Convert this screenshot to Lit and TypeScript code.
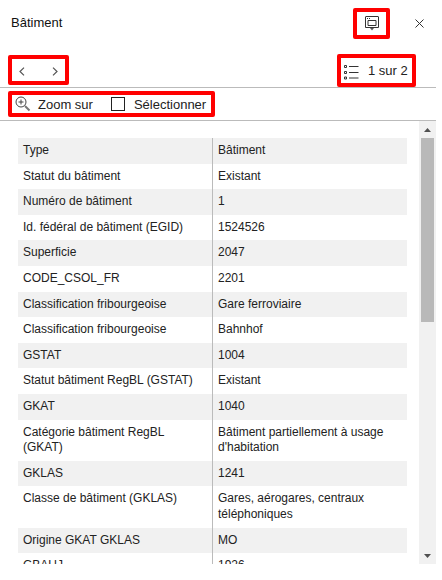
import {LitElement, css, html} from "lit";
import {customElement} from "lit/decorators.js";

const rows: [string, string][] = [
  ["Type", "Bâtiment"],
  ["Statut du bâtiment", "Existant"],
  ["Numéro de bâtiment", "1"],
  ["Id. fédéral de bâtiment (EGID)", "1524526"],
  ["Superficie", "2047"],
  ["CODE_CSOL_FR", "2201"],
  ["Classification fribourgeoise", "Gare ferroviaire"],
  ["Classification fribourgeoise", "Bahnhof"],
  ["GSTAT", "1004"],
  ["Statut bâtiment RegBL (GSTAT)", "Existant"],
  ["GKAT", "1040"],
  ["Catégorie bâtiment RegBL (GKAT)", "Bâtiment partiellement à usage d'habitation"],
  ["GKLAS", "1241"],
  ["Classe de bâtiment (GKLAS)", "Gares, aérogares, centraux téléphoniques"],
  ["Origine GKAT GKLAS", "MO"],
  ["GBAUJ", "1926"],
];

@customElement("app-root")
export class AppRoot extends LitElement {
  static override styles = css`
    :host {
      display: block;
      width: 436px;
      height: 580px;
      background: #fff;
      color: #222;
      font-family: "Liberation Sans", Arial, sans-serif;
      font-size: 12px;
      overflow: hidden;
    }

    svg {
      display: block;
      flex: none;
    }

    .marked {
      border: 4px solid #f00;
      border-radius: 2px;
      box-sizing: border-box;
      display: flex;
      align-items: center;
    }

    .header {
      height: 47px;
      display: flex;
      align-items: flex-start;
      padding-left: 11px;
    }

    .title {
      margin-top: 15px;
      line-height: 15px;
      font-size: 13px;
      color: #111;
    }

    .comment {
      margin: 8px 0 0 auto;
      width: 37px;
      height: 31px;
      justify-content: center;
    }

    .close {
      margin: 19px 12px 0 25px;
    }

    .nav {
      height: 41px;
      display: flex;
      align-items: flex-start;
      padding: 8px 20px 0 8px;
      box-sizing: border-box;
      border-bottom: 1px solid #bbb;
    }

    .arrows {
      width: 61px;
      height: 30px;
      gap: 27px;
      padding: 2px 0 0 7px;
    }

    .count {
      margin-left: auto;
      width: 79px;
      height: 33px;
      margin-top: -1px;
      gap: 9px;
      padding-left: 3px;
      font-size: 13px;
      white-space: nowrap;
    }

    .list-icon {
      margin-top: 2px;
    }

    .tools {
      height: 33px;
      padding: 3px 0 0 8px;
      box-sizing: border-box;
      border-bottom: 1px solid #bbb;
    }

    .toolbox {
      width: 207px;
      height: 26px;
      padding-left: 3px;
      font-size: 13px;
      white-space: nowrap;
    }

    .zoom-label {
      margin-left: 7px;
    }

    .check {
      width: 12px;
      height: 12px;
      border: 1px solid #222;
      margin: 0 9px 0 18px;
    }

    .body {
      display: flex;
      height: 443px;
    }

    .content {
      flex: 1;
      overflow: hidden;
      padding: 17px 12px 0 18px;
    }

    table {
      width: 389px;
      border-collapse: collapse;
      table-layout: fixed;
    }

    td {
      padding: 5px;
      line-height: 15.6px;
      vertical-align: top;
    }

    td:first-child {
      border-right: 1px solid #bbb;
    }

    tr:nth-child(odd) td {
      background: #f1f1f1;
    }

    .scrollbar {
      width: 17px;
      background: #f1f1f1;
      display: flex;
      flex-direction: column;
      align-items: center;
    }

    .step {
      height: 17px;
      display: flex;
      align-items: center;
      justify-content: center;
      flex: none;
    }

    .thumb {
      width: 13px;
      height: 184px;
      background: #b9b9b9;
    }

    .gap {
      flex: 1;
    }
  `;

  override render() {
    return html`
      <div class="header">
        <div class="title">Bâtiment</div>
        <div class="marked comment">
          <svg width="14" height="15" viewBox="0 0 14 15" fill="none" stroke="#333">
            <path d="M1 .5h12a.5.5 0 0 1 .5.5v10.5h-13V1a.5.5 0 0 1 .5-.5z" />
            <path d="M3 4.500h8v5H3z" />
            <path d="M2 2.500h1M4 2.500h1" />
            <path d="M5 12h4l-2 2.500z" fill="#555" stroke="none" />
          </svg>
        </div>
        <svg class="close" width="9" height="9" viewBox="0 0 9 9" stroke="#333">
          <path d="M.5.5l8 8M8.500.5l-8 8" />
        </svg>
      </div>
      <div class="nav">
        <div class="marked arrows">
          <svg width="6" height="9" viewBox="0 0 6 9" fill="none" stroke="#555" stroke-width="1.2">
            <path d="M5 .6L1 4.500 5 8.400" />
          </svg>
          <svg width="6" height="9" viewBox="0 0 6 9" fill="none" stroke="#555" stroke-width="1.2">
            <path d="M1 .6L5 4.500 1 8.400" />
          </svg>
        </div>
        <div class="marked count">
          <svg class="list-icon" width="15" height="16" viewBox="0 0 15 16" fill="none" stroke="#333">
            <path d="M.5 1.500h2v2h-2zM.5 7.500h2v2h-2zM.5 13h2v2h-2zM5 2.500h9.500M5 8.500h9.500M5 14h9.500" />
          </svg>
          <span>1 sur 2</span>
        </div>
      </div>
      <div class="tools">
        <div class="marked toolbox">
          <svg width="16" height="16" viewBox="0 0 16 16" fill="none" stroke="#444">
            <circle cx="6" cy="6" r="5" />
            <path d="M3.500 6h5M6 3.500v5" />
            <path d="M10 10l4.500 4.500" stroke-width="2" stroke="#777" />
          </svg>
          <span class="zoom-label">Zoom sur</span>
          <span class="check"></span>
          <span>Sélectionner</span>
        </div>
      </div>
      <div class="body">
        <div class="content">
          <table>
            ${rows.map(
              ([name, value]) => html`<tr><td>${name}</td><td>${value}</td></tr>`,
            )}
          </table>
        </div>
        <div class="scrollbar">
          <div class="step">
            <svg width="7" height="4" viewBox="0 0 7 4"><path d="M3.500 0L7 4H0z" fill="#505050" /></svg>
          </div>
          <div class="thumb"></div>
          <div class="gap"></div>
          <div class="step">
            <svg width="7" height="4" viewBox="0 0 7 4"><path d="M0 0h7L3.500 4z" fill="#505050" /></svg>
          </div>
        </div>
      </div>
    `;
  }
}
